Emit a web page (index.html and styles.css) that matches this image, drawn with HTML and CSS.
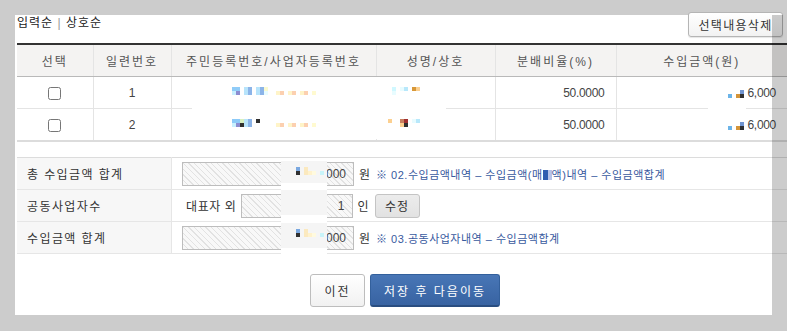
FILE: index.html
```html
<!DOCTYPE html>
<html lang="ko">
<head>
    <meta charset="UTF-8">
    <title>공동사업자 분배</title>
    <link rel="stylesheet" href="styles.css">
</head>
<body>
    <div class="panel">
        <!-- 정렬 / 삭제 -->
        <div class="toolbar">
            <div class="sort">입력순 <span class="bar">|</span> 상호순</div>
            <button class="btn-del">선택내용삭제</button>
        </div>

        <!-- 공동사업자 목록 -->
        <div class="list-wrap">
            <table class="list">
                <colgroup>
                    <col class="c1"><col class="c2"><col class="c3"><col class="c4"><col class="c5"><col class="c6">
                </colgroup>
                <thead>
                    <tr>
                        <th>선택</th>
                        <th>일련번호</th>
                        <th>주민등록번호/사업자등록번호</th>
                        <th>성명/상호</th>
                        <th>분배비율(%)</th>
                        <th>수입금액(원)</th>
                    </tr>
                </thead>
                <tbody>
                    <tr>
                        <td><input type="checkbox"></td>
                        <td>1</td>
                        <td></td>
                        <td></td>
                        <td class="num">50.0000</td>
                        <td class="num"><svg class="dots" width="16" height="8" viewBox="0 0 16 8"><rect x="0" y="4" width="4" height="4" fill="#6cb4e8"/><rect x="8" y="4" width="4" height="4" fill="#d49438"/><rect x="12" y="0" width="4" height="4" fill="#7094d0"/><rect x="12" y="4" width="4" height="4" fill="#303030"/></svg>6,000</td>
                    </tr>
                    <tr>
                        <td><input type="checkbox"></td>
                        <td>2</td>
                        <td></td>
                        <td></td>
                        <td class="num">50.0000</td>
                        <td class="num"><svg class="dots" width="16" height="8" viewBox="0 0 16 8"><rect x="0" y="4" width="4" height="4" fill="#6cb4e8"/><rect x="8" y="4" width="4" height="4" fill="#d49438"/><rect x="12" y="0" width="4" height="4" fill="#7094d0"/><rect x="12" y="4" width="4" height="4" fill="#303030"/></svg>6,000</td>
                    </tr>
                </tbody>
            </table>

            <!-- masked personal data -->
            <div class="mask mask-ids">
                <svg width="254" height="62" viewBox="0 0 254 62">
                    <rect x="40" y="10" width="8" height="4" fill="#90ccf8"/>
                    <rect x="40" y="14" width="4" height="4" fill="#c8f0ff"/>
                    <rect x="44" y="14" width="4" height="4" fill="#8c8cd0"/>
                    <rect x="52" y="10" width="4" height="8" fill="#b8e4fb"/>
                    <rect x="56" y="10" width="4" height="8" fill="#8cb4e8"/>
                    <rect x="64" y="10" width="4" height="8" fill="#b8e4fb"/>
                    <rect x="68" y="10" width="4" height="8" fill="#8cb4e8"/>
                    <rect x="72" y="10" width="4" height="4" fill="#fafad0"/>
                    <rect x="72" y="14" width="4" height="4" fill="#e8fcff"/>
                    <rect x="84" y="14" width="4" height="4" fill="#fff4c8"/>
                    <rect x="88" y="14" width="4" height="4" fill="#fcd0b0"/>
                    <rect x="96" y="14" width="4" height="4" fill="#fff4c8"/>
                    <rect x="100" y="14" width="4" height="4" fill="#fcd0b0"/>
                    <rect x="108" y="14" width="4" height="4" fill="#fff4c8"/>
                    <rect x="112" y="14" width="4" height="4" fill="#fcd0b0"/>
                    <rect x="120" y="14" width="4" height="4" fill="#fffad0"/>
                    <rect x="200" y="10" width="4" height="4" fill="#d0f8ff"/>
                    <rect x="200" y="14" width="4" height="4" fill="#e8fcff"/>
                    <rect x="208" y="10" width="4" height="4" fill="#e8fcff"/>
                    <rect x="212" y="10" width="4" height="4" fill="#b8e8fb"/>
                    <rect x="220" y="10" width="4" height="4" fill="#d89838"/>
                    <rect x="224" y="10" width="4" height="4" fill="#fcd090"/>

                    <rect x="40" y="42" width="8" height="4" fill="#8ccaf8"/>
                    <rect x="48" y="42" width="4" height="4" fill="#d8f0c0"/>
                    <rect x="40" y="46" width="4" height="4" fill="#c8f0ff"/>
                    <rect x="44" y="46" width="4" height="4" fill="#8c8cd0"/>
                    <rect x="48" y="46" width="4" height="4" fill="#303030"/>
                    <rect x="52" y="42" width="4" height="8" fill="#b8e4fb"/>
                    <rect x="56" y="42" width="4" height="8" fill="#8cb4e8"/>
                    <rect x="64" y="42" width="4" height="4" fill="#303030"/>
                    <rect x="84" y="46" width="4" height="4" fill="#fff4c8"/>
                    <rect x="88" y="46" width="4" height="4" fill="#fcd0b0"/>
                    <rect x="96" y="46" width="4" height="4" fill="#fff4c8"/>
                    <rect x="100" y="46" width="4" height="4" fill="#fcd0b0"/>
                    <rect x="108" y="46" width="4" height="4" fill="#fff4c8"/>
                    <rect x="112" y="46" width="4" height="4" fill="#fcd0b0"/>
                    <rect x="120" y="46" width="4" height="4" fill="#fffad0"/>
                    <rect x="196" y="42" width="4" height="4" fill="#fcd090"/>
                    <rect x="208" y="42" width="4" height="4" fill="#c88060"/>
                    <rect x="212" y="42" width="4" height="4" fill="#a03030"/>
                    <rect x="208" y="46" width="4" height="4" fill="#fcd090"/>
                    <rect x="212" y="46" width="4" height="4" fill="#303030"/>
                    <rect x="220" y="42" width="4" height="4" fill="#e8fcff"/>
                    <rect x="224" y="42" width="4" height="4" fill="#b8e8fb"/>
                </svg>
            </div>
            <div class="mask mask-amt"></div>
        </div>

        <!-- 합계 -->
        <div class="sum-wrap">
            <table class="sum">
                <tr>
                    <th>총 수입금액 합계</th>
                    <td>
                        <div class="line">
                            <div class="field">12,000</div>
                            <span class="unit">원</span>
                            <span class="note">※ 02.수입금액내역 – 수입금액(매<span class="blot"></span>액)내역 – 수입금액합계</span>
                        </div>
                    </td>
                </tr>
                <tr>
                    <th>공동사업자수</th>
                    <td>
                        <div class="line">
                            <span class="lead">대표자 외</span>
                            <div class="field short">1</div>
                            <span class="unit">인</span>
                            <button class="btn-edit">수정</button>
                        </div>
                    </td>
                </tr>
                <tr>
                    <th>수입금액 합계</th>
                    <td>
                        <div class="line">
                            <div class="field">12,000</div>
                            <span class="unit">원</span>
                            <span class="note">※ 03.공동사업자내역 – 수입금액합계</span>
                        </div>
                    </td>
                </tr>
            </table>

            <div class="mask mask-sum">
                <div class="mask-box b1">
                    <svg width="46" height="22" viewBox="0 0 46 22"><rect x="15" y="6" width="4" height="4" fill="#7aa8e0"/><rect x="15" y="10" width="4" height="4" fill="#303030"/><rect x="23" y="6" width="4" height="8" fill="#fbe9bf"/><rect x="27" y="10" width="4" height="4" fill="#fff2cc"/><rect x="31" y="10" width="4" height="4" fill="#fffadf"/><rect x="39" y="10" width="4" height="4" fill="#c8f4fa"/></svg>
                </div>
                <div class="mask-box b2"></div>
                <div class="mask-box b3">
                    <svg width="46" height="22" viewBox="0 0 46 22"><rect x="15" y="6" width="4" height="4" fill="#7aa8e0"/><rect x="15" y="10" width="4" height="4" fill="#303030"/><rect x="23" y="6" width="4" height="8" fill="#fbe9bf"/><rect x="27" y="10" width="4" height="4" fill="#fff2cc"/><rect x="31" y="10" width="4" height="4" fill="#fffadf"/><rect x="39" y="10" width="4" height="4" fill="#c8f4fa"/></svg>
                </div>
            </div>
        </div>

        <!-- 이동 버튼 -->
        <div class="actions">
            <button class="btn-prev">이전</button>
            <button class="btn-next">저장 후 다음이동</button>
        </div>
    </div>

    <div class="edge"></div>
</body>
</html>
```

FILE: styles.css
```css
html, body {
    overflow: hidden;
}

body {
    margin: 0;
    padding: 15px 0 16px 15px;
    background-color: #cccccc;
    font-family: 'Liberation Sans', 'Noto Sans CJK KR', sans-serif;
    font-size: 12px;
    color: #333;
    position: relative;
}

.panel {
    width: 772px;
    height: 300px;
    box-sizing: border-box;
    padding-left: 2px;
    background-color: #fff;
}

/* toolbar */
.toolbar {
    display: flex;
    justify-content: space-between;
    align-items: flex-start;
    height: 28px;
}

.sort {
    line-height: 16px;
    color: #222;
    letter-spacing: 1px;
}

.sort .bar {
    color: #999;
}

.btn-del {
    margin-top: -3px;
    margin-right: 4px;
    width: 95px;
    height: 25px;
    padding: 0;
    border: 1px solid #b5b5b5;
    border-radius: 3px;
    background: linear-gradient(#ffffff, #f2f2f2);
    box-shadow: 0 1px 1px rgba(0, 0, 0, 0.1);
    font-family: inherit;
    font-size: 12px;
    letter-spacing: 1.3px;
    color: #333;
}

/* list */
.list-wrap, .sum-wrap {
    position: relative;
}

.list, .sum {
    width: 770px;
    border-collapse: collapse;
    table-layout: fixed;
}

.list {
    border-top: 2px solid #333;
    border-bottom: 2px solid #dcdcdc;
}

.c1 { width: 76px; }
.c2 { width: 78px; }
.c3 { width: 205px; }
.c4 { width: 119px; }
.c5 { width: 121px; }
.c6 { width: 171px; }

.list th {
    height: 31px;
    padding: 0;
    background-color: #f4f3f2;
    border-bottom: 1px solid #b9b9b9;
    border-left: 1px solid #e4e4e4;
    font-weight: normal;
    color: #555;
    letter-spacing: 2px;
}

.list td {
    height: 31px;
    padding: 0;
    text-align: center;
    color: #444;
    border-left: 1px solid #e4e4e4;
    border-bottom: 1px solid #e4e4e4;
}

.list th:first-child, .list td:first-child {
    border-left: none;
}

.list td.num {
    text-align: right;
    padding-right: 11px;
    letter-spacing: -0.3px;
}

.list input[type="checkbox"] {
    margin: 0;
    width: 13px;
    height: 13px;
    vertical-align: middle;
}

.dots {
    vertical-align: -1px;
    margin-right: 3px;
}

.mask {
    position: absolute;
    background-color: #fff;
}

.mask-ids {
    left: 175px;
    top: 34px;
    width: 254px;
    height: 62px;
}

.mask-ids svg, .mask-box svg {
    display: block;
}

.mask-amt {
    left: 691px;
    top: 61px;
    width: 38px;
    height: 9px;
}

/* sum */
.sum-wrap {
    margin-top: 15px;
}

.sum {
    border-top: 1px solid #dcdcdc;
    border-bottom: 1px solid #d0d0d0;
}

.sum th {
    width: 144px;
    height: 31px;
    padding: 0 0 0 10px;
    text-align: left;
    font-weight: normal;
    color: #333;
    letter-spacing: 1.4px;
    background-color: #f7f7f7;
    border-right: 1px solid #e6e6e6;
    border-bottom: 1px solid #e6e6e6;
}

.sum td {
    height: 31px;
    padding: 0 0 0 10px;
    border-bottom: 1px solid #e6e6e6;
}

.line {
    display: flex;
    align-items: center;
}

.field {
    width: 172px;
    height: 24px;
    box-sizing: border-box;
    padding-right: 7px;
    border: 1px solid #bdbdbd;
    background: repeating-linear-gradient(45deg, #f8f8f8 0 3px, #e2e2e2 3px 4px);
    line-height: 22px;
    text-align: right;
    color: #444;
}

.field.short {
    width: 112px;
}

.unit {
    margin-left: 5px;
    color: #333;
}

.lead {
    margin-left: 4px;
    margin-right: 4px;
    color: #333;
    letter-spacing: 0.6px;
}

.note {
    margin-left: 6px;
    font-size: 11px;
    letter-spacing: 0.5px;
    color: #38599e;
}

.blot {
    display: inline-block;
    width: 9px;
    height: 10px;
    vertical-align: -1px;
    background: linear-gradient(90deg, #2f5db0 0 60%, #b6c2e8 60%);
}

.btn-edit {
    margin-left: 6px;
    width: 45px;
    height: 24px;
    padding: 0;
    border: 1px solid #c4c4c4;
    border-radius: 3px;
    background: linear-gradient(#ececec, #e2e2e2);
    font-family: inherit;
    font-size: 12px;
    letter-spacing: 1px;
    color: #333;
}

.mask-sum {
    left: 264px;
    top: 1px;
    width: 46px;
    height: 98px;
}

.mask-box {
    position: absolute;
    left: 0;
    width: 46px;
    background-color: #f5f5f5;
}

.b1 { top: 3px; height: 22px; }
.b2 { top: 32px; height: 25px; }
.b3 { top: 65px; height: 25px; }

/* actions */
.actions {
    display: flex;
    justify-content: center;
    gap: 5px;
    margin-top: 20px;
    padding-left: 6px;
}

.btn-prev, .btn-next {
    height: 33px;
    padding: 0;
    border-radius: 3px;
    font-family: inherit;
    font-size: 12px;
    letter-spacing: 2px;
}

.btn-prev {
    width: 55px;
    border: 1px solid #bdbdbd;
    background: linear-gradient(#ffffff, #f1f1f1);
    color: #333;
}

.btn-next {
    width: 130px;
    border: 1px solid #33609c;
    border-bottom: 2px solid #294d80;
    background: linear-gradient(#4876b6, #3863a2);
    color: #fff;
}

/* right edge shade */
.edge {
    position: absolute;
    top: 15px;
    right: 0;
    width: 15px;
    height: 300px;
    background-color: rgba(0, 0, 0, 0.2);
}
```
